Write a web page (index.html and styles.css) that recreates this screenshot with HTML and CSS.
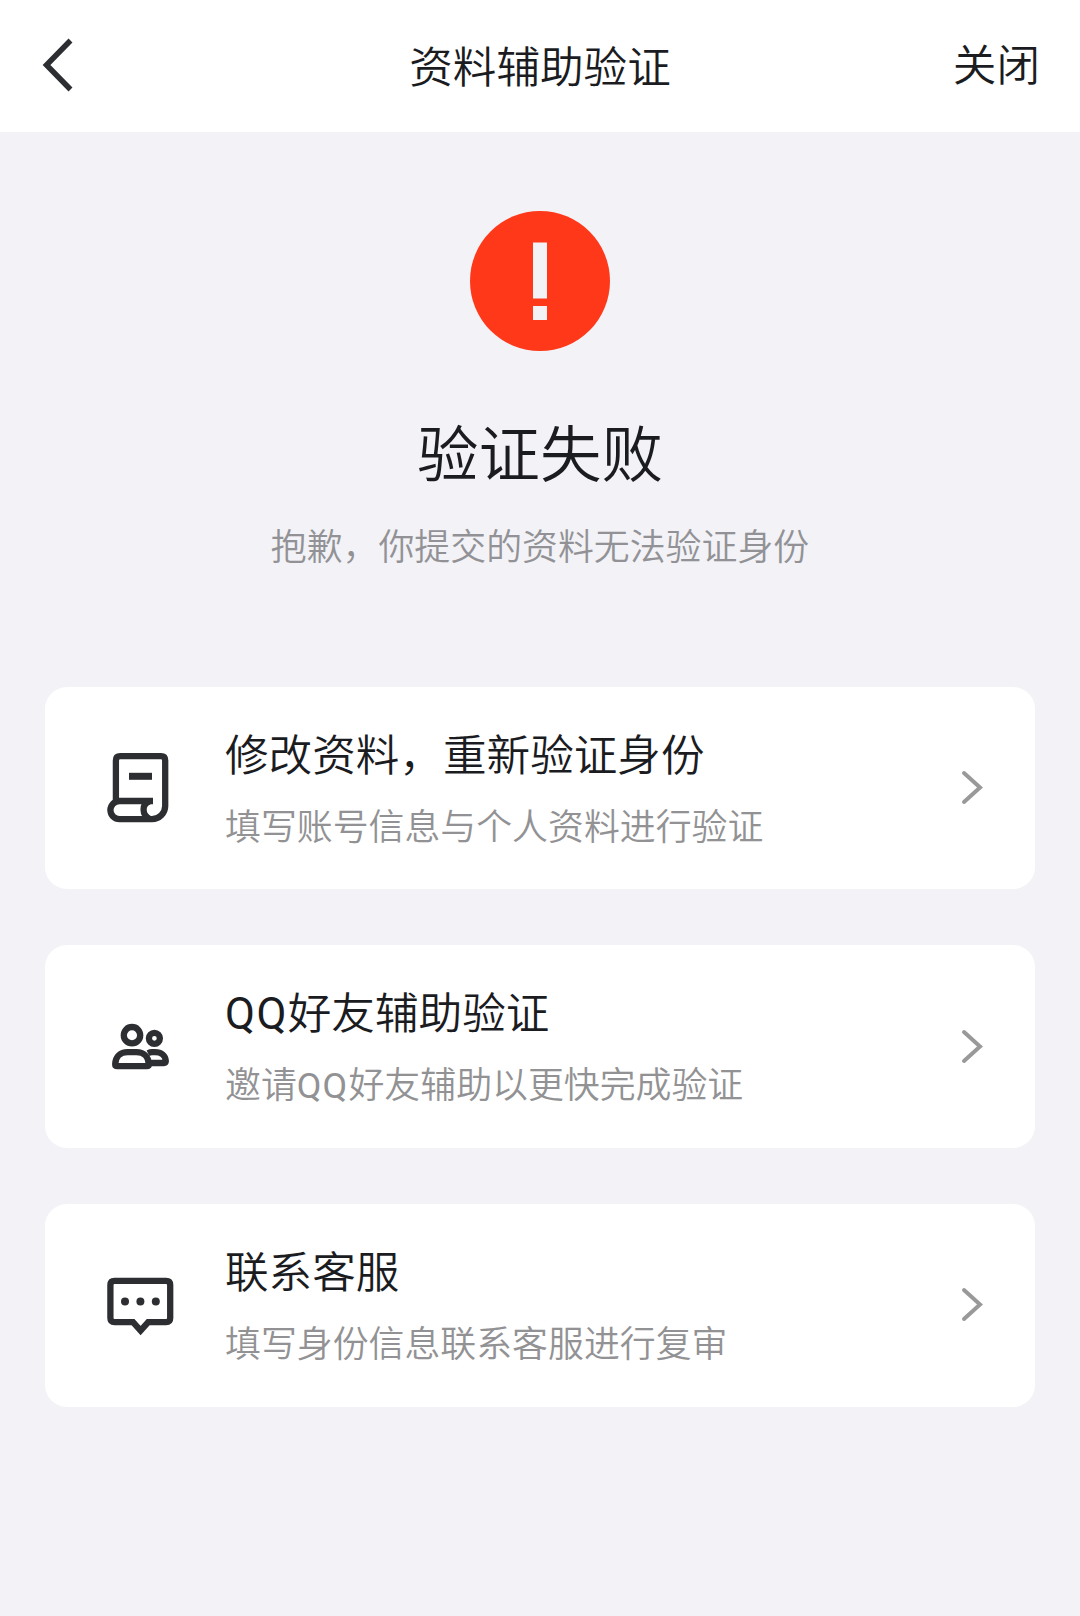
FILE: index.html
```html
<!DOCTYPE html>
<html lang="zh-CN">
<head>
  <meta charset="UTF-8">
  <title>资料辅助验证</title>
  <link rel="stylesheet" href="styles.css">
</head>
<body>

  <!-- 顶部导航 -->
  <header class="topo">
    <a class="back" href="#" aria-label="返回">
      <svg width="36" height="60" viewBox="0 0 36 60"><path d="M30.500 5.500 6.500 30l24 24.500"/></svg>
    </a>
    <h1>资料辅助验证</h1>
    <a class="close" href="#">关闭</a>
  </header>

  <!-- 验证结果 -->
  <section class="result">
    <svg width="140" height="140" viewBox="0 0 140 140">
      <circle cx="70" cy="70" r="70" fill="#ff381a"/>
      <path d="M63 31.500h14v56H63zM63 95h14v14H63z" fill="#f2f2f7"/>
    </svg>
    <h2>验证失败</h2>
    <p>抱歉，你提交的资料无法验证身份</p>
  </section>

  <!-- 可选操作 -->
  <main class="list">
    <a class="card" href="#">
      <svg class="icon" viewBox="0 0 80 80">
        <path d="M15.900 54V12.500q0-4.300 4.300-4.300H61q4.200 0 4.200 4.300V58A13.300 13.300 0 0 1 52 71.200H19.500a9.100 9.100 0 0 1 0-18.200H53"/>
        <path d="M49.500 53.500C41.500 56 41.500 67 50 71"/>
        <path d="M29 28.300h23" stroke-width="7"/>
      </svg>
      <div class="text">
        <h3>修改资料，重新验证身份</h3>
        <p>填写账号信息与个人资料进行验证</p>
      </div>
      <svg class="arrow" viewBox="0 0 24 36"><path d="M4 3l16 14.500L4 32"/></svg>
    </a>

    <a class="card" href="#">
      <svg class="icon" viewBox="0 0 80 80">
        <circle cx="32" cy="28.200" r="8.200"/>
        <circle cx="54.400" cy="31.300" r="5.500"/>
        <path d="M17.200 59.200h29.600q2 0 2-2C48.500 49.500 43.500 45.200 36.500 45.200h-9C20.500 45.200 15.500 49.500 15.200 57.200q0 2 2 2z"/>
        <path d="M48 46.200q2-1 4-1h3C61.500 45.200 65.500 49 65.800 54q0 2-2 2H50"/>
      </svg>
      <div class="text">
        <h3><span class="latin">QQ</span>好友辅助验证</h3>
        <p>邀请<span class="latin">QQ</span>好友辅助以更快完成验证</p>
      </div>
      <svg class="arrow" viewBox="0 0 24 36"><path d="M4 3l16 14.500L4 32"/></svg>
    </a>

    <a class="card" href="#">
      <svg class="icon" viewBox="0 0 80 80">
        <path d="M14.500 15.800h51.600q4.100 0 4.100 4.100V53q0 4.100-4.100 4.100H48.200L40.600 65.500 33 57.100H14.500q-4.100 0-4.100-4.100V19.900q0-4.100 4.100-4.100z"/>
        <g class="dots"><circle cx="25" cy="36.400" r="4"/><circle cx="40.400" cy="36.400" r="4"/><circle cx="55.800" cy="36.400" r="4"/></g>
      </svg>
      <div class="text">
        <h3>联系客服</h3>
        <p>填写身份信息联系客服进行复审</p>
      </div>
      <svg class="arrow" viewBox="0 0 24 36"><path d="M4 3l16 14.500L4 32"/></svg>
    </a>
  </main>

</body>
</html>
```

FILE: styles.css
```css
* {
  box-sizing: border-box;
  margin: 0;
  padding: 0;
}

body {
  min-height: 100vh;
  background: #f2f2f7;
  color: #1b1c1f;
  font-family: 'Noto Sans CJK SC', sans-serif;
  font-weight: 350;
}

h1, h2, h3 {
  font-weight: 350;
}

a {
  color: inherit;
  text-decoration: none;
}

svg {
  display: block;
  fill: none;
}

.topo {
  display: grid;
  grid-template-columns: 1fr auto 1fr;
  align-items: center;
  height: 132px;
  padding: 0 40px;
  background: #fff;
}

.back {
  justify-self: start;
  padding-bottom: 3px;
}

.back path {
  stroke: #2d2e32;
  stroke-width: 5.5;
}

.topo h1, .close {
  font-size: 43.6px;
  line-height: 60px;
}

.topo h1 {
  padding-bottom: 5px;
}

.close {
  justify-self: end;
  padding-bottom: 8px;
}

.result {
  display: flex;
  flex-direction: column;
  align-items: center;
  padding-top: 79px;
}

.result h2 {
  margin-top: 56px;
  font-size: 61.5px;
  line-height: 88px;
}

.result p {
  margin-top: 24px;
  font-size: 35.9px;
  line-height: 50px;
  color: #929296;
}

.list {
  display: flex;
  flex-direction: column;
  gap: 56px;
  padding: 117.8px 45px 0;
}

.card {
  display: flex;
  align-items: center;
  height: 202.6px;
  padding: 0 51px 0 55px;
  border-radius: 22px;
  background: #fff;
}

.icon {
  width: 80px;
  height: 80px;
  stroke: #2d2e32;
  stroke-width: 6.3;
}

.dots {
  fill: #2d2e32;
  stroke: none;
}

.text {
  flex: 1;
  margin-left: 45px;
  padding-bottom: 6px;
}

.text h3 {
  font-size: 43.6px;
  line-height: 60px;
}

.text p {
  margin-top: 17px;
  font-size: 35.9px;
  line-height: 50px;
  color: #929294;
}

.latin {
  font-family: Roboto, sans-serif;
  font-weight: 400;
  line-height: 1;
  letter-spacing: 0.032em;
}

.arrow {
  width: 24px;
  height: 36px;
  stroke: #999;
  stroke-width: 4;
  stroke-linecap: round;
}
```
